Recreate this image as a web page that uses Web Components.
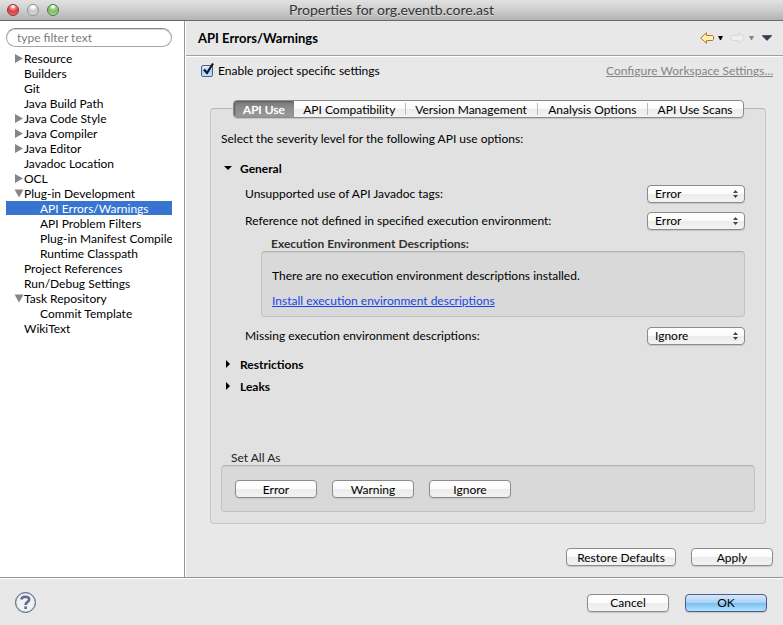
<!DOCTYPE html>
<html lang="en">
<head>
<meta charset="utf-8">
<title>Properties for org.eventb.core.ast</title>
<style>
  html, body { height: 100%; }
  body { margin: 0; background: #e8e8e8; color: #000; font: 12px/15px Lato, "Noto Sans", sans-serif; }
</style>
</head>
<body>
<properties-window></properties-window>
<script>
const define = (name, html, setup) => {
  const template = document.createElement('template');
  template.innerHTML = '<style>*{box-sizing:border-box}button,select,input{font:inherit;color:inherit;margin:0}</style>' + html;
  customElements.define(name, class extends HTMLElement {
    connectedCallback() {
      if (this.shadowRoot) return;
      const root = this.attachShadow({ mode: 'open' });
      root.append(template.content.cloneNode(true));
      if (setup) setup(this, root);
    }
  });
};

define('title-bar', `
<style>
  :host { display: grid; grid-template-columns: 60px 1fr 60px; align-items: center; height: 21px; flex: none;
    background: linear-gradient(#e2e2e2, #cfcfcf 45%, #b3b3b3); border-bottom: 1px solid #686868; box-sizing: border-box; }
  .lights { display: flex; gap: 8px; padding-left: 7px; }
  button { width: 12px; height: 12px; padding: 0; border-radius: 50%; border: 1px solid #777; }
  .close { border-color: #8c3434; background: radial-gradient(circle at 50% 15%, #fff 0 8%, #f3898a 25%, #dd3b40 55%, #f58b83 100%); }
  .min { border-color: #929292; background: radial-gradient(circle at 50% 15%, #fff 0 12%, #c6c6c6 50%, #e6e6e6 100%); }
  .zoom { border-color: #4b783d; background: radial-gradient(circle at 50% 15%, #fff 0 8%, #a5d68f 28%, #7dbd68 55%, #c0f0a8 100%); }
  h1 { margin: 0; font-size: 14px; line-height: 20px; font-weight: 400; text-align: center; color: #333; text-shadow: 0 1px #dedede; }
</style>
<div class="lights"><button class="close" aria-label="Close"></button><button class="min" aria-label="Minimize"></button><button class="zoom" aria-label="Zoom"></button></div>
<h1><slot></slot></h1>`);

define('filter-box', `
<style>
  :host { display: block; }
  input { display: block; width: 100%; height: 19px; padding: 0 10px; border: 1px solid #a6a6a6; border-top-color: #858585;
    border-radius: 10px; background: #fff; box-shadow: inset 0 1px 1px #d2d2d2; outline: 0; }
  input::placeholder { color: #7b7b7b; opacity: 1; }
</style>
<input type="text" placeholder="type filter text" aria-label="type filter text">`);

define('tree-item', `
<style>
  :host { display: flex; align-items: center; height: 15px; padding-left: 8px; white-space: nowrap; overflow: hidden; }
  :host([child]) { padding-left: 24px; }
  :host([selected]) { background: linear-gradient(#3875d1 14px, transparent 14px); color: #fff; }
  svg { display: block; width: 10px; height: 9px; flex: none; fill: none; }
  :host([state]) svg { fill: #868686; }
  :host([state=open]) svg { transform: rotate(90deg); }
  span { line-height: 15px; }
</style>
<svg viewBox="0 0 10 9"><path d="M1 0L9 4.5L1 9Z"/></svg><span><slot></slot></span>`,
  (host) => host.setAttribute('role', 'treeitem'));

define('page-header', `
<style>
  :host { display: flex; align-items: center; justify-content: space-between; height: 35px; padding: 0 11px 0 12px; flex: none;
    border-bottom: 1px solid #a0a0a0; box-shadow: 0 1px #fff; box-sizing: border-box; }
  h2 { margin: 0; font-size: 13px; line-height: 18px; font-weight: 700; }
  nav { display: flex; align-items: center; }
  button { display: flex; padding: 0; border: 0; background: none; }
  svg { display: block; }
  .down { margin-left: 3px; margin-right: 8px; }
</style>
<h2><slot></slot></h2>
<nav>
  <button aria-label="Back"><svg width="15" height="12" viewBox="0 0 15 12"><path d="M.7 6L6.5 .7V3.5H12.7L13.5 4.3V7.7L12.7 8.5H6.5V11.3Z" fill="#fff0b8" stroke="#b57a25"/></svg></button>
  <button class="down" aria-label="Back history"><svg width="5" height="4"><path d="M0 0H5L3 4H2Z"/></svg></button>
  <button aria-label="Forward"><svg width="15" height="12" viewBox="0 0 15 12"><path d="M13.5 6L7.7 .7V3.5H1.5L.7 4.3V7.7L1.5 8.5H7.7V11.3Z" fill="#efefef" stroke="#d7d7d7"/></svg></button>
  <button class="down" aria-label="Forward history"><svg width="5" height="4"><path d="M0 0H5L3 4H2Z" fill="#858585"/></svg></button>
  <button aria-label="View menu"><svg width="10" height="6"><path d="M0 .5H10L5 5.5Z" fill="#37375f" stroke="#222" stroke-width=".5"/></svg></button>
</nav>`);

define('check-box', `
<style>
  :host { display: block; }
  label { display: flex; align-items: center; gap: 5px; }
  .box { position: relative; width: 12px; height: 12px; }
  input { appearance: none; display: block; width: 12px; height: 12px; border: 1px solid #4d5f8e; border-radius: 2px;
    background: linear-gradient(#e5f1fb, #a5cdf3 50%, #c5e8fd); }
  svg { position: absolute; left: 0; top: -3px; pointer-events: none; display: none; }
  input:checked + svg { display: block; }
</style>
<label><span class="box"><input type="checkbox" checked><svg width="14" height="14"><path d="M3 7.5L6 11L12 1.5" fill="none" stroke="#111629" stroke-width="2.2"/></svg></span><span><slot></slot></span></label>`);

define('push-button', `
<style>
  :host { display: block; width: 82px; }
  :host([wide]) { width: 110px; }
  button { display: block; width: 100%; height: 18px; padding: 0; line-height: 15px; text-align: center; border: 1px solid #8b8b8b; border-radius: 4px;
    background: linear-gradient(#fff, #fbfbfb 48%, #ececec 52%, #f3f3f3); box-shadow: 0 1px 1px #c6c6c6; }
  :host([primary]) button { border-color: #4e5c96; background: linear-gradient(#d5e8f9, #a8d2f6 48%, #7bbdf1 52%, #b3e4ff); }
</style>
<button type="button"><slot></slot></button>`);

define('tab-strip', `
<style>
  :host { display: grid; grid-template-columns: 60fr 111fr 133fr 110fr 96fr; height: 18px; background: linear-gradient(#fff, #fbfbfb 48%, #ececec 52%, #f3f3f3);
    border: 1px solid #8b8b8b; border-radius: 4px; box-shadow: 0 1px 1px #c6c6c6; overflow: hidden; box-sizing: border-box; }
  button { padding: 0; border: 0; background: none; white-space: nowrap; line-height: 15px; }
  button + button + button { background: linear-gradient(#b9b9b9, #b9b9b9) left center / 1px 12px no-repeat; }
  [aria-selected=true] { color: #fff; background: linear-gradient(#777, #8c8c8c 45%, #999); box-shadow: inset 1px 1px 2px #5d5d5d; text-shadow: 0 0 1px #fff; }
</style>`, (host, root) => {
  host.setAttribute('role', 'tablist');
  host.getAttribute('tabs').split('|').forEach((name, i) => {
    const b = document.createElement('button');
    b.type = 'button';
    b.setAttribute('role', 'tab');
    b.setAttribute('aria-selected', String(i === 0));
    b.textContent = name;
    root.append(b);
  });
});

define('severity-row', `
<style>
  :host { display: flex; align-items: center; justify-content: space-between; height: 27px; }
  .pick { position: relative; width: 98px; }
  select { appearance: none; display: block; width: 100%; height: 18px; padding: 0 7px; line-height: 15px; border: 1px solid #8b8b8b; border-radius: 4px;
    background: linear-gradient(#fff, #fbfbfb 48%, #ececec 52%, #f3f3f3); box-shadow: 0 1px 1px #c6c6c6; }
  svg { position: absolute; right: 7px; top: 5px; pointer-events: none; }
</style>
<label for="level"><slot></slot></label>
<span class="pick"><select id="level"><option>Error</option><option>Warning</option><option>Ignore</option></select>
<svg width="5" height="8" fill="#444"><path d="M0 3L2.5 0L5 3ZM0 5L2.5 8L5 5Z"/></svg></span>`,
  (host, root) => { root.querySelector('select').value = host.getAttribute('value'); });

define('section-fold', `
<style>
  :host { display: block; }
  button { display: flex; align-items: center; gap: 8px; height: 22px; padding: 0; border: 0; background: none; font-weight: 700; line-height: 15px; }
  svg { display: block; width: 8px; height: 8px; }
  :host([open]) svg { transform: rotate(90deg); }
  .content { padding-left: 21px; }
  :host([open]) .content { padding-top: 1px; }
</style>
<button type="button"><svg viewBox="0 0 8 8"><path d="M2 0L6 4L2 8Z"/></svg><span></span></button>
<div class="content"><slot></slot></div>`, (host, root) => {
  root.querySelector('span').textContent = host.getAttribute('heading');
  root.querySelector('button').setAttribute('aria-expanded', String(host.hasAttribute('open')));
});

define('group-box', `
<style>
  :host { display: block; }
  h3 { margin: 0; padding-left: 10px; font-size: inherit; line-height: 15px; font-weight: 400; color: #222; }
  :host([strong]) h3 { font-weight: 700; color: #333; }
  .box { border: 1px solid #c2c2c2; border-top-color: #b2b2b2; border-radius: 4px; background: #d9d9d9; box-shadow: inset 0 1px 1px #cecece; }
</style>
<h3></h3><div class="box"><slot></slot></div>`, (host, root) => {
  root.querySelector('h3').textContent = host.getAttribute('heading');
});

define('help-button', `
<style>
  :host { display: block; }
  button { display: grid; place-items: center; width: 21px; height: 21px; padding: 0; border: 1px solid #4f6284; border-radius: 50%;
    background: #f0f1f3; box-shadow: inset 0 0 1px #4f6284; }
  svg { display: block; }
</style>
<button type="button" aria-label="Help"><svg width="11" height="15" viewBox="0 0 11 15" fill="none" stroke="#5b6c8d" stroke-width="2.6"><path d="M1.5 4.5C1.8 .8 9.2 .8 9.2 4.4C9.2 7 5.6 6.8 5.6 10"/><path d="M5.6 11.4V14"/></svg></button>`);

define('properties-window', `
<style>
  :host { display: flex; flex-direction: column; min-height: 100%; }
  .body { flex: 1; display: grid; grid-template-columns: 185px minmax(0, 1fr); }
  aside { display: flex; flex-direction: column; gap: 4px; padding: 7px 12px 0 6px; background: #fff; border-right: 1px solid #949494; }
  main { display: flex; flex-direction: column; border-left: 1px solid #fff; min-width: 0; }
  .enable { display: flex; justify-content: space-between; align-items: center; padding: 7px 10px 0 15px; }
  .enable a { color: #858585; }
  .panel { flex: 1; display: flex; flex-direction: column; margin: 30px 17px 0 24px; padding: 0 10px 11px; border: 1px solid #c6c6c6; border-top-color: #b5b5b5;
    border-radius: 4px; background: #e1e1e1; }
  tab-strip { margin: -9px 11px 0 12px; }
  p { margin: 0; }
  .intro { padding-top: 13px; }
  .sections { padding: 11px 10px 0 3px; flex: 1; }
  .sections > section-fold:first-child { margin-bottom: 4px; }
  .env { padding: 2px 0 5px 16px; }
  .note { display: flex; flex-direction: column; gap: 10px; padding: 16px 10px 8px; }
  .note a { color: #1a44e8; }
  .row { display: flex; gap: 15px; padding: 14px 13px 13px; }
  .actions { display: flex; justify-content: flex-end; gap: 15px; padding: 24px 10px 11px; }
  footer { display: flex; align-items: center; gap: 16px; height: 48px; padding: 2px 16px 0 15px; border-top: 1px solid #949494; box-shadow: inset 0 1px #fff; }
  footer help-button { margin-right: auto; }
</style>
<title-bar>Properties for org.eventb.core.ast</title-bar>
<div class="body">
  <aside>
    <filter-box></filter-box>
    <div role="tree">
      <tree-item state="closed">Resource</tree-item>
      <tree-item>Builders</tree-item>
      <tree-item>Git</tree-item>
      <tree-item>Java Build Path</tree-item>
      <tree-item state="closed">Java Code Style</tree-item>
      <tree-item state="closed">Java Compiler</tree-item>
      <tree-item state="closed">Java Editor</tree-item>
      <tree-item>Javadoc Location</tree-item>
      <tree-item state="closed">OCL</tree-item>
      <tree-item state="open">Plug-in Development</tree-item>
      <tree-item child selected>API Errors/Warnings</tree-item>
      <tree-item child>API Problem Filters</tree-item>
      <tree-item child>Plug-in Manifest Compiler</tree-item>
      <tree-item child>Runtime Classpath</tree-item>
      <tree-item>Project References</tree-item>
      <tree-item>Run/Debug Settings</tree-item>
      <tree-item state="open">Task Repository</tree-item>
      <tree-item child>Commit Template</tree-item>
      <tree-item>WikiText</tree-item>
    </div>
  </aside>
  <main>
    <page-header>API Errors/Warnings</page-header>
    <div class="enable"><check-box>Enable project specific settings</check-box><a href="#workspace">Configure Workspace Settings...</a></div>
    <div class="panel">
      <tab-strip tabs="API Use|API Compatibility|Version Management|Analysis Options|API Use Scans"></tab-strip>
      <p class="intro">Select the severity level for the following API use options:</p>
      <div class="sections">
        <section-fold heading="General" open>
          <severity-row value="Error">Unsupported use of API Javadoc tags:</severity-row>
          <severity-row value="Error">Reference not defined in specified execution environment:</severity-row>
          <div class="env"><group-box strong heading="Execution Environment Descriptions:">
            <div class="note"><p>There are no execution environment descriptions installed.</p><a href="#install">Install execution environment descriptions</a></div>
          </group-box></div>
          <severity-row value="Ignore">Missing execution environment descriptions:</severity-row>
        </section-fold>
        <section-fold heading="Restrictions"></section-fold>
        <section-fold heading="Leaks"></section-fold>
      </div>
      <group-box heading="Set All As"><div class="row"><push-button>Error</push-button><push-button>Warning</push-button><push-button>Ignore</push-button></div></group-box>
    </div>
    <div class="actions"><push-button wide>Restore Defaults</push-button><push-button>Apply</push-button></div>
  </main>
</div>
<footer><help-button></help-button><push-button>Cancel</push-button><push-button primary>OK</push-button></footer>`);
</script>
</body>
</html>
